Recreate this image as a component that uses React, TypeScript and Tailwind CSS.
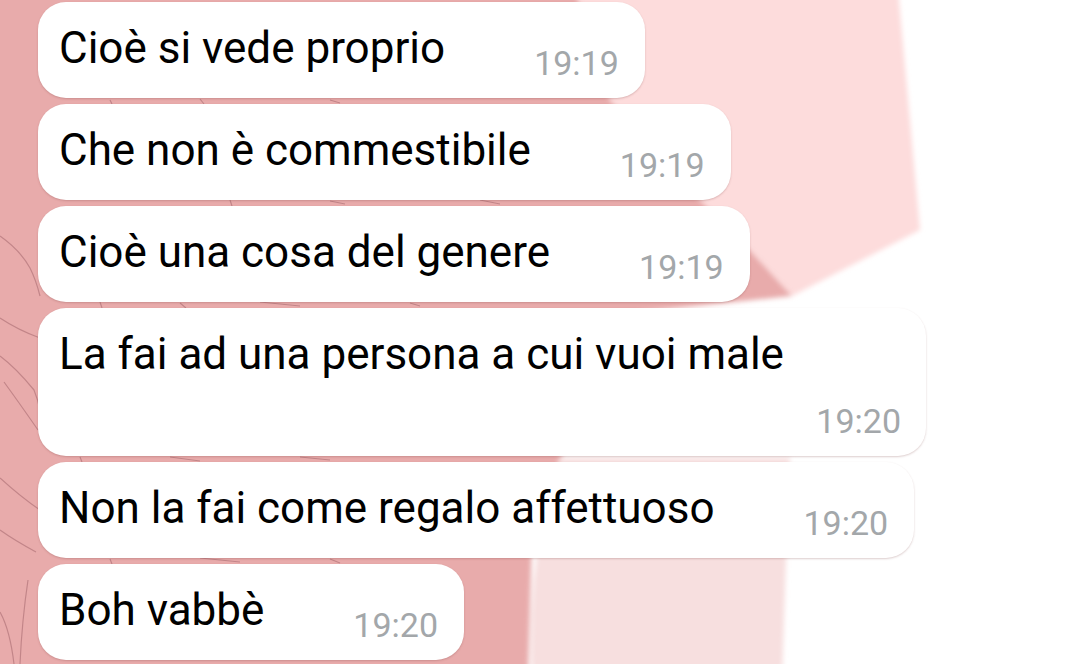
import React from 'react';

interface Message {
  text: string;
  time: string;
  wide?: boolean;
}

const messages: Message[] = [
  { text: 'Cioè si vede proprio', time: '19:19' },
  { text: 'Che non è commestibile', time: '19:19' },
  { text: 'Cioè una cosa del genere', time: '19:19' },
  { text: 'La fai ad una persona a cui vuoi male', time: '19:20', wide: true },
  { text: 'Non la fai come regalo affettuoso', time: '19:20' },
  { text: 'Boh vabbè', time: '19:20' },
];

// blurred wallpaper behind the chat
const Wallpaper: React.FC = () => (
  <svg className="absolute inset-0" width="1080" height="664" viewBox="0 0 1080 664">
    <defs>
      <filter id="soft" x="-5%" y="-5%" width="110%" height="110%">
        <feGaussianBlur stdDeviation="2.5" />
      </filter>
    </defs>
    <rect width="1080" height="664" fill="#ffffff" />
    <g filter="url(#soft)">
      <path
        d="M-10 -10 L575 -10 L610 100 L700 200 L748 248 L792 296 L640 312 L600 400 L560 458 L532 540 L528 680 L-10 680 Z"
        fill="#e8abab"
      />
      <path d="M575 -10 L898 -10 L920 230 L792 296 L748 248 L700 200 L610 100 Z" fill="#fddcdc" />
      <path d="M560 458 Q540 520 534 580 Q530 630 532 680 L782 680 L786 560 L790 458 Z" fill="#f7dfdf" />
    </g>
    <g fill="none" stroke="#a4676d" strokeWidth="1.2" opacity="0.55">
      <path d="M0 236 Q20 250 30 268 Q36 280 40 296" />
      <path d="M0 318 Q18 330 40 338" />
      <path d="M0 356 Q16 368 34 390 Q38 400 40 410" />
      <path d="M4 382 Q20 404 38 430" />
      <path d="M0 478 Q22 498 40 510" />
      <path d="M0 530 Q14 540 36 552" />
      <path d="M28 580 Q22 620 20 664" />
      <path d="M0 612 Q10 630 14 664" />
      <path d="M110 100 L112 104 M200 99 L204 104 M330 100 L340 103" />
      <path d="M230 200 L232 206 M330 201 L345 204 M480 200 L500 204" />
      <path d="M100 302 L102 308 M180 303 L186 308 M260 302 L300 306 M410 303 L420 306" />
      <path d="M80 457 L82 462 M170 457 L200 461 M300 457 L330 460" />
      <path d="M110 559 L112 564 M200 558 L240 562 M330 559 L340 563" />
    </g>
  </svg>
);

const Bubble: React.FC<{ msg: Message }> = ({ msg }) => {
  if (msg.wide) {
    return (
      <div className="flex w-[888px] flex-col rounded-[28px] bg-white pl-[21px] pr-[25px] shadow-[0_1px_2px_rgba(120,60,60,0.25)]">
        <span className="whitespace-nowrap pt-[21px] text-[44px] leading-[50px] text-black">{msg.text}</span>
        <span className="mt-[24px] mb-[17px] self-end text-[34px] leading-[36px] text-[#a3a7aa]">{msg.time}</span>
      </div>
    );
  }
  return (
    <div className="flex items-end rounded-[28px] bg-white pl-[21px] pr-[26px] shadow-[0_1px_2px_rgba(120,60,60,0.25)]">
      <span className="whitespace-nowrap pt-[21px] pb-[25px] text-[44px] leading-[50px] text-black">{msg.text}</span>
      <span className="ml-[89px] mb-[17px] text-[34px] leading-[36px] text-[#a3a7aa]">{msg.time}</span>
    </div>
  );
};

export default function App() {
  return (
    <div className="relative h-[664px] w-[1080px] overflow-hidden font-['Roboto',sans-serif]">
      <Wallpaper />
      <div className="relative flex flex-col items-start gap-[6px] pt-[2px] pl-[38px]">
        {messages.map((m, i) => (
          <Bubble key={i} msg={m} />
        ))}
      </div>
    </div>
  );
}
